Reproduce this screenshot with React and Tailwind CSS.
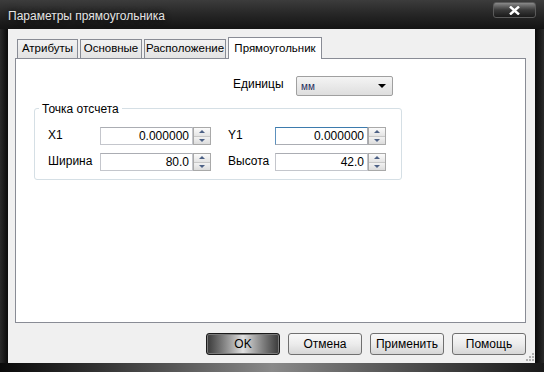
import React from 'react';

const font = { fontFamily: '"Liberation Sans", Arial, sans-serif' };

function Spin() {
  return (
    <div className="flex h-[18px] w-[18px] flex-col border border-[#a9a9a9] bg-[#f4f4f4]">
      <div className="flex flex-1 items-center justify-center border-b border-[#c8c8c8] bg-gradient-to-b from-[#fbfbfb] to-[#e4e4e4]">
        <div className="h-0 w-0 border-x-[3px] border-b-[3px] border-x-transparent border-b-[#4d6185]" />
      </div>
      <div className="flex flex-1 items-center justify-center bg-gradient-to-b from-[#f2f2f2] to-[#dcdcdc]">
        <div className="h-0 w-0 border-x-[3px] border-t-[3px] border-x-transparent border-t-[#4d6185]" />
      </div>
    </div>
  );
}

function NumField({ value, focused }) {
  return (
    <div className="flex h-[18px] items-stretch">
      <div
        className={
          'flex w-[93px] items-center justify-end border bg-white pr-[3px] text-[12px] text-black ' +
          (focused ? 'border-[#abadb3] border-t-[#3d7bad] border-l-[#5c90bd]' : 'border-[#c4c6cc] border-t-[#abadb3]')
        }
      >
        {value}
      </div>
      <Spin />
    </div>
  );
}

function Tab({ label, active, w }) {
  if (active) {
    return (
      <div className={'relative z-10 -mb-px flex h-[22px] shrink-0 items-center justify-center border border-b-0 border-[#898c95] bg-white text-[11.5px] ' + w}>
        {label}
      </div>
    );
  }
  return (
    <div className={'mt-[2px] flex h-[19px] shrink-0 items-center justify-center border border-b-0 border-[#898c95] bg-gradient-to-b from-[#f2f2f2] to-[#e3e3e3] text-[11.5px] ' + w}>
      {label}
    </div>
  );
}

function Button({ label, primary }) {
  if (primary) {
    return (
      <div className="flex h-[22px] w-[74px] items-center justify-center rounded-[3px] border border-[#1a1a1a] bg-gradient-to-r from-[#3a3a3a] via-[#e0e0e0] to-[#3a3a3a] text-[12px] text-black shadow-[inset_0_0_0_1px_#7a7a7a]">
        {label}
      </div>
    );
  }
  return (
    <div className="flex h-[22px] w-[74px] items-center justify-center rounded-[3px] border border-[#707070] bg-gradient-to-b from-[#f8f8f8] via-[#ececec] to-[#d6d6d6] text-[12px] text-black">
      {label}
    </div>
  );
}

export default function App() {
  return (
    <div style={font} className="flex h-[372px] w-[544px] flex-col bg-black text-black">
      {/* Title bar */}
      <div className="flex h-[29px] items-start justify-between bg-gradient-to-b from-[#3c3c3c] via-[#262626] to-[#141414] pl-[8px] pr-[8px]">
        <div className="pt-[7px] text-[12px] text-[#e4e4e4] [text-shadow:0_0_6px_#000]">Параметры прямоугольника</div>
        <div className="mt-[2px] flex h-[16px] w-[43px] items-center justify-center rounded-[3px] border border-[#5a5a5a] bg-gradient-to-b from-[#8a8a8a] via-[#3a3a3a] to-[#1a1a1a]">
          <svg width="11" height="9" viewBox="0 0 11 9">
            <path d="M1 0.5 L10 8.5 M10 0.5 L1 8.5" stroke="#fff" strokeWidth="2.4" />
          </svg>
        </div>
      </div>

      <div className="flex flex-1">
        <div className="w-[8px] bg-gradient-to-r from-[#2a2a2a] to-[#0a0a0a]" />
        {/* Client area */}
        <div className="flex flex-1 flex-col bg-[#f0f0f0] pl-[7px] pr-[9px] pt-[8px]">
          <div className="flex items-end gap-[2px] pl-[2px]">
            <Tab label="Атрибуты" w="w-[61px]" />
            <Tab label="Основные" w="w-[62px]" />
            <Tab label="Расположение" w="w-[82px]" />
            <Tab label="Прямоугольник" w="w-[94px]" active />
          </div>
          <div className="flex h-[265px] flex-col border border-[#898c95] bg-white pl-[18px]">
            <div className="mt-[17px] flex h-[20px] items-center">
              <div className="ml-[199px] w-[63px] pb-[4px] text-[12px]">Единицы</div>
              <div className="flex h-[20px] w-[97px] items-center justify-between rounded-[2px] border border-[#a0a0a0] bg-gradient-to-b from-[#f4f4f4] to-[#dedede] pl-[4px] pr-[6px]">
                <span className="text-[10px] text-[#1e2d5a]">мм</span>
                <div className="h-0 w-0 border-x-[4px] border-t-[4px] border-x-transparent border-t-black" />
              </div>
            </div>
            {/* Group box */}
            <div className="relative mt-[12px] h-[72px] w-[368px] rounded-[3px] border border-[#d5dfe5]">
              <div className="absolute -top-[7px] left-[4px] bg-white px-[3px] text-[12px] leading-[14px]">Точка отсчета</div>
              <div className="mt-[17px] flex flex-col gap-[6px]">
                <div className="flex items-center">
                  <div className="ml-[13px] w-[52px] pb-[2px] text-[12px]">X1</div>
                  <NumField value="0.000000" />
                  <div className="ml-[17px] w-[47px] pb-[2px] text-[12px]">Y1</div>
                  <NumField value="0.000000" focused />
                </div>
                <div className="flex items-center">
                  <div className="ml-[13px] w-[52px] pb-[2px] text-[12px]">Ширина</div>
                  <NumField value="80.0" />
                  <div className="ml-[17px] w-[47px] pb-[2px] text-[12px]">Высота</div>
                  <NumField value="42.0" />
                </div>
              </div>
            </div>
          </div>
          {/* Buttons */}
          <div className="mt-[10px] flex justify-end gap-[8px]">
            <Button label="OK" primary />
            <Button label="Отмена" />
            <Button label="Применить" />
            <Button label="Помощь" />
          </div>
          <div className="relative flex-1">
            <div className="absolute -right-[8px] bottom-[2px] grid grid-cols-3 gap-[1px]">
              <span />
              <span />
              <span className="h-[2px] w-[2px] bg-[#b0b0b0]" />
              <span />
              <span className="h-[2px] w-[2px] bg-[#b0b0b0]" />
              <span className="h-[2px] w-[2px] bg-[#b0b0b0]" />
              <span className="h-[2px] w-[2px] bg-[#b0b0b0]" />
              <span className="h-[2px] w-[2px] bg-[#b0b0b0]" />
              <span className="h-[2px] w-[2px] bg-[#b0b0b0]" />
            </div>
          </div>
        </div>
        <div className="w-[9px] bg-gradient-to-l from-[#2a2a2a] to-[#0a0a0a]" />
      </div>
      <div className="h-[9px] bg-gradient-to-r from-[#0a0a0a] via-[#8a8a8a] to-[#1a1a1a]" />
    </div>
  );
}
